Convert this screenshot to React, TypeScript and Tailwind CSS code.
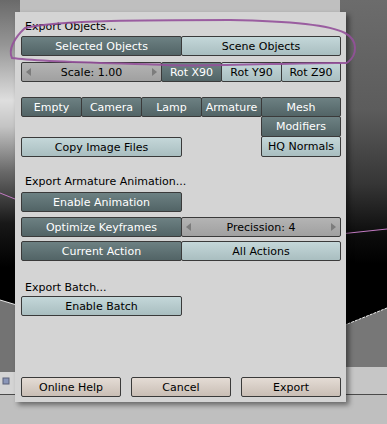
import React from "react";

const V: Record<string, string> = {
  dark: "bg-linear-to-b from-[#6d8183] to-[#526466] text-white",
  light: "bg-linear-to-b from-[#c4d7d9] to-[#a9bec0] text-black",
  gray: "bg-linear-to-b from-[#b4b4b4] to-[#a0a0a0] text-black",
  beige: "bg-linear-to-b from-[#e4dcd5] to-[#c9beb5] text-black",
};

function B({
  v,
  cls,
  children,
  arrows,
}: {
  v: string;
  cls: string;
  children: React.ReactNode;
  arrows?: boolean;
}) {
  return (
    <div
      className={`relative flex items-center justify-center border border-[#3a3a3a] rounded-[2px] shrink-0 ${V[v]} ${cls}`}
    >
      {arrows && (
        <svg className="absolute left-[4px] top-1/2 -translate-y-1/2" width="5" height="8" viewBox="0 0 5 8">
          <path d="M5 0 L0 4 L5 8 Z" fill="#7c7c7c" />
        </svg>
      )}
      <span className="leading-none">{children}</span>
      {arrows && (
        <svg className="absolute right-[4px] top-1/2 -translate-y-1/2" width="5" height="8" viewBox="0 0 5 8">
          <path d="M0 0 L5 4 L0 8 Z" fill="#7c7c7c" />
        </svg>
      )}
    </div>
  );
}

function Background() {
  return (
    <svg className="absolute inset-0" width="387" height="424" viewBox="0 0 387 424">
      <defs>
        <linearGradient id="lg" x1="0" y1="0" x2="0" y2="1">
          <stop offset="0" stopColor="#6a6a6a" />
          <stop offset="0.12" stopColor="#959595" />
          <stop offset="0.27" stopColor="#dedede" />
          <stop offset="0.34" stopColor="#c4c4c4" />
          <stop offset="0.46" stopColor="#6a6a6a" />
          <stop offset="0.6" stopColor="#181818" />
          <stop offset="0.72" stopColor="#000000" />
        </linearGradient>
        <linearGradient id="rg" x1="0" y1="0" x2="0" y2="1">
          <stop offset="0" stopColor="#6c6c6c" />
          <stop offset="0.3" stopColor="#5c5c5c" />
          <stop offset="0.5" stopColor="#363636" />
          <stop offset="0.64" stopColor="#0c0c0c" />
          <stop offset="0.72" stopColor="#000000" />
        </linearGradient>
      </defs>
      <rect x="0" y="0" width="387" height="424" fill="#bfbfbf" />
      <rect x="0" y="0" width="20" height="372" fill="url(#lg)" />
      <rect x="340" y="0" width="47" height="367" fill="url(#rg)" />
      <polygon points="0,300 20,306 20,372 0,372" fill="#737373" />
      <line x1="0" y1="300" x2="20" y2="306" stroke="#e8e8e8" strokeWidth="1" />
      <polygon points="340,327 387,308 387,367 340,367" fill="#777777" />
      <line x1="340" y1="327" x2="387" y2="308" stroke="#f0f0f0" strokeWidth="1" strokeDasharray="3 1" />
      <line x1="0" y1="193" x2="20" y2="201" stroke="#c27ac2" strokeWidth="1" />
      <line x1="340" y1="234" x2="387" y2="229" stroke="#c27ac2" strokeWidth="1" />
      <rect x="0" y="372" width="20" height="23" fill="#d4d4d4" />
      <rect x="340" y="367" width="47" height="27" fill="#c6c6c6" />
      <rect x="0" y="394" width="387" height="1" fill="#4a4a4a" />
      <rect x="3" y="378" width="6" height="6" fill="#8a96b8" stroke="#5a6078" strokeWidth="1" />
    </svg>
  );
}

export default function App() {
  return (
    <div className="relative w-[387px] h-[424px] overflow-hidden font-['DejaVu_Sans',sans-serif] text-[11px]">
      <Background />
      <div className="absolute left-[15px] top-[12px] w-[331px] h-[390px] bg-[#d4d4d4] shadow-[3px_3px_5px_rgba(0,0,0,0.45)] flex flex-col pl-[6px] pt-[8px] pb-[5px]">
        <div className="h-[14px] leading-[14px] text-black pl-[4px]">Export Objects...</div>
        <div className="flex mt-[2px]">
          <B v="dark" cls="w-[161px] h-[20px]">Selected Objects</B>
          <B v="light" cls="w-[160px] h-[20px] -ml-px">Scene Objects</B>
        </div>
        <div className="flex mt-[6px]">
          <B v="gray" cls="w-[141px] h-[20px]" arrows>Scale: 1.00</B>
          <B v="dark" cls="w-[61px] h-[20px] -ml-px">Rot X90</B>
          <B v="light" cls="w-[61px] h-[20px] -ml-px">Rot Y90</B>
          <B v="light" cls="w-[60px] h-[20px] -ml-px">Rot Z90</B>
        </div>
        <div className="flex mt-[15px]">
          <B v="dark" cls="w-[61px] h-[20px]">Empty</B>
          <B v="dark" cls="w-[61px] h-[20px] -ml-px">Camera</B>
          <B v="dark" cls="w-[61px] h-[20px] -ml-px">Lamp</B>
          <B v="dark" cls="w-[61px] h-[20px] -ml-px">Armature</B>
          <B v="dark" cls="w-[80px] h-[20px] -ml-px">Mesh</B>
        </div>
        <div className="flex -mt-px">
          <div className="w-[240px] flex flex-col">
            <B v="light" cls="w-[161px] h-[20px] mt-[21px]">Copy Image Files</B>
          </div>
          <div className="flex flex-col">
            <B v="dark" cls="w-[80px] h-[21px]">Modifiers</B>
            <B v="light" cls="w-[80px] h-[21px] -mt-px">HQ Normals</B>
          </div>
        </div>
        <div className="h-[14px] leading-[14px] text-black pl-[4px] mt-[18px]">Export Armature Animation...</div>
        <div className="flex mt-[3px]">
          <B v="dark" cls="w-[161px] h-[20px]">Enable Animation</B>
        </div>
        <div className="flex mt-[5px]">
          <B v="dark" cls="w-[161px] h-[20px]">Optimize Keyframes</B>
          <B v="gray" cls="w-[160px] h-[20px] -ml-px" arrows>Precission: 4</B>
        </div>
        <div className="flex mt-[4px]">
          <B v="dark" cls="w-[161px] h-[20px]">Current Action</B>
          <B v="light" cls="w-[160px] h-[20px] -ml-px">All Actions</B>
        </div>
        <div className="h-[14px] leading-[14px] text-black pl-[4px] mt-[20px]">Export Batch...</div>
        <div className="flex mt-[1px]">
          <B v="light" cls="w-[161px] h-[20px]">Enable Batch</B>
        </div>
        <div className="flex mt-auto gap-[10px]">
          <B v="beige" cls="w-[100px] h-[20px]">Online Help</B>
          <B v="beige" cls="w-[100px] h-[20px]">Cancel</B>
          <B v="beige" cls="w-[100px] h-[20px]">Export</B>
        </div>
      </div>
      <svg className="absolute inset-0 pointer-events-none" width="387" height="424" viewBox="0 0 387 424">
        <path
          d="M347 63 C 300 62, 220 67, 165 65 S 40 62, 12 58 C 8 50, 14 38, 25 28 C 60 20, 150 20, 230 20 C 290 21, 330 25, 345 33 C 358 40, 358 55, 347 63"
          fill="none"
          stroke="#94509a"
          strokeWidth="2"
          strokeOpacity="0.9"
        />
      </svg>
    </div>
  );
}
